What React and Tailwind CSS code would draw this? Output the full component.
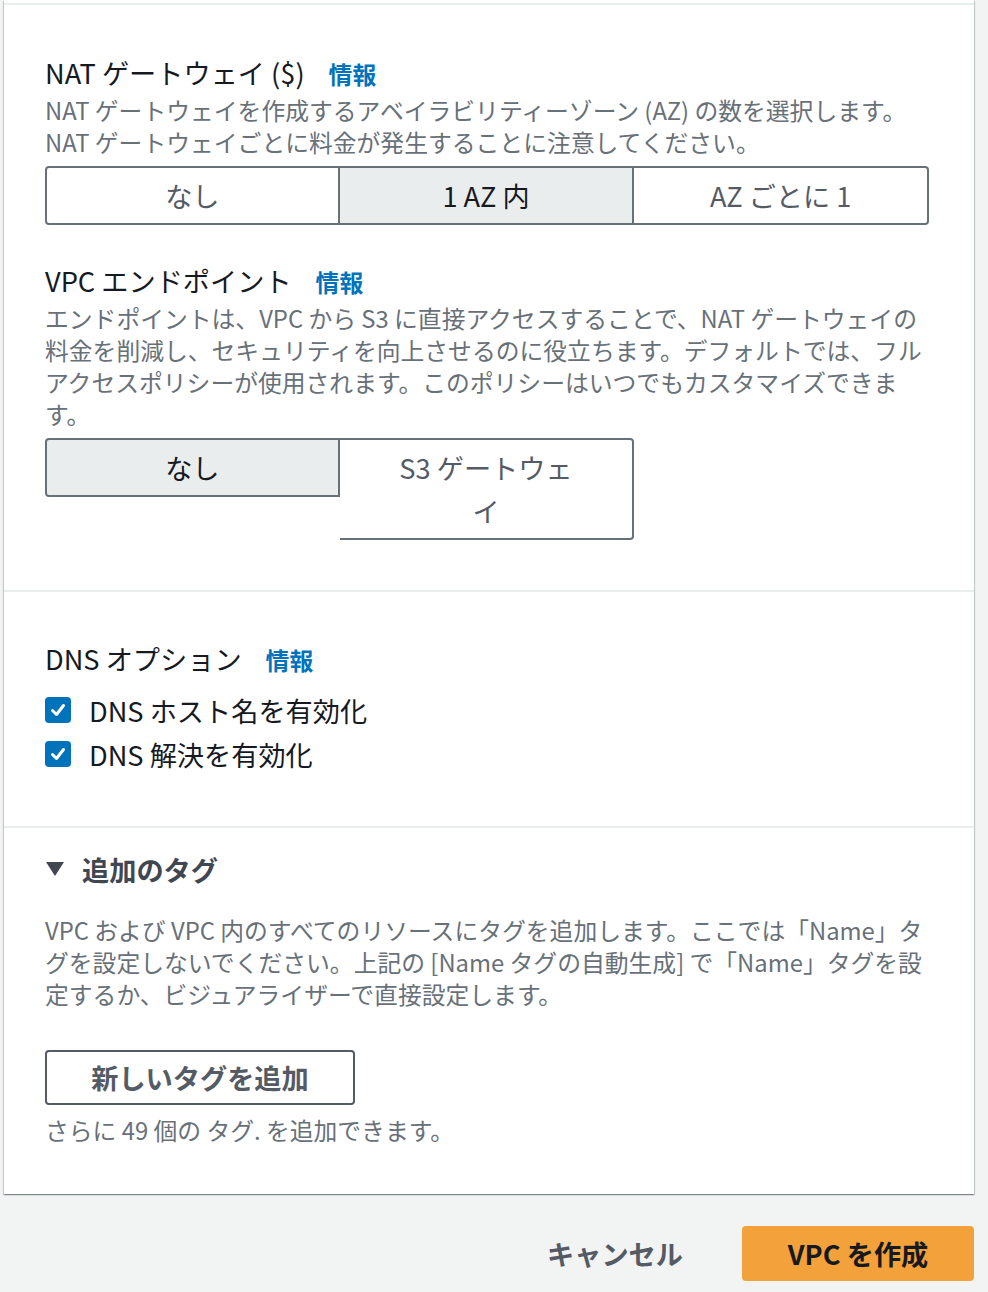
const SegButton = ({ label, selected, first, last }) => (
  <button
    className={`border-y-2 border-r-2 border-[#687078] px-[52px] py-[6px] text-center text-[27.2px] leading-[43px] ${
      first ? "border-l-2 rounded-l-[4px]" : ""
    } ${last ? "rounded-r-[4px]" : ""} ${
      selected ? "bg-[#eaeded] text-[#16191f]" : "bg-white text-[#545b64]"
    }`}
  >
    {label}
  </button>
);

const Info = () => (
  <a className="ml-[24px] text-[23.8px] font-bold leading-none text-[#0073bb]">
    情報
  </a>
);

const Title = ({ children }) => (
  <h2 className="text-[27.2px] leading-[36px] text-[#16191f]">
    {children}
    <Info />
  </h2>
);

const Desc = ({ children, className = "" }) => (
  <p className={`text-[23.8px] leading-[32px] text-[#687078] ${className}`}>
    {children}
  </p>
);

const Check = ({ label }) => (
  <label className="flex h-[44px] items-center gap-[18px]">
    <span className="flex h-[26px] w-[26px] items-center justify-center rounded-[4px] bg-[#0073bb]">
      <svg width="18" height="18" viewBox="0 0 18 18">
        <polyline
          points="3.5,9.5 7.5,13.5 14.5,4.5"
          fill="none"
          stroke="white"
          strokeWidth="3"
          strokeLinecap="round"
          strokeLinejoin="round"
        />
      </svg>
    </span>
    <span className="text-[27.2px] text-[#16191f]">{label}</span>
  </label>
);

export default function App() {
  return (
    <div className="min-h-screen bg-[#f2f3f3] font-['Noto_Sans_CJK_JP',sans-serif]">
      <div className="ml-[4px] mr-[14px] bg-white shadow-[0_1px_1px_0_rgba(0,28,36,0.3),1px_1px_1px_0_rgba(0,28,36,0.15),-1px_1px_1px_0_rgba(0,28,36,0.15)]">
        <div className="h-[3px]" />

        {/* NAT / endpoints */}
        <section className="border-t-2 border-[#eaeded] px-[41px] pt-[49px] pb-[50px]">
          <Title>NAT ゲートウェイ ($)</Title>
          <Desc className="mt-1">
            NAT ゲートウェイを作成するアベイラビリティーゾーン (AZ) の数を選択します。
            NAT ゲートウェイごとに料金が発生することに注意してください。
          </Desc>
          <div className="mt-2 grid w-[884px] grid-cols-3 items-start">
            <SegButton label="なし" first />
            <SegButton label="1 AZ 内" selected />
            <SegButton label="AZ ごとに 1" last />
          </div>

          <div className="mt-[37px]">
            <Title>VPC エンドポイント</Title>
          </div>
          <Desc className="mt-1">
            エンドポイントは、VPC から S3 に直接アクセスすることで、NAT ゲートウェイの料金を削減し、セキュリティを向上させるのに役立ちます。デフォルトでは、フルアクセスポリシーが使用されます。このポリシーはいつでもカスタマイズできます。
          </Desc>
          <div className="mt-2 grid w-[884px] grid-cols-3 items-start">
            <SegButton label="なし" selected first />
            <SegButton label="S3 ゲートウェイ" last />
          </div>
        </section>

        {/* DNS */}
        <section className="border-t-2 border-[#eaeded] px-[41px] pt-[48px] pb-[50px]">
          <Title>DNS オプション</Title>
          <div className="mt-3 flex flex-col">
            <Check label="DNS ホスト名を有効化" />
            <Check label="DNS 解決を有効化" />
          </div>
        </section>

        {/* tags */}
        <section className="border-t-2 border-[#eaeded] px-[41px] pt-[21px] pb-[48px]">
          <h2 className="flex items-center gap-[18px] text-[27.2px] font-bold leading-[40px] text-[#414750]">
            <svg width="18" height="14" viewBox="0 0 18 14" className="ml-[1px]">
              <polygon points="0,0 18,0 9,14" fill="#414750" />
            </svg>
            追加のタグ
          </h2>
          <Desc className="mt-[25px]">
            VPC および VPC 内のすべてのリソースにタグを追加します。ここでは「Name」タグを設定しないでください。上記の [Name タグの自動生成] で「Name」タグを設定するか、ビジュアライザーで直接設定します。
          </Desc>
          <button className="mt-[40px] h-[55px] w-[310px] rounded-[4px] border-2 border-[#545b64] text-[27.2px] font-bold text-[#545b64]">
            新しいタグを追加
          </button>
          <Desc className="mt-[9px]">さらに 49 個の タグ. を追加できます。</Desc>
        </section>
      </div>

      <div className="mr-[14px] flex items-center justify-end pt-[32px]">
        <button className="mr-[59px] text-[27.2px] font-bold text-[#545b64]">
          キャンセル
        </button>
        <button className="h-[55px] w-[232px] rounded-[4px] bg-[#f2a13b] text-[27.2px] font-bold text-[#16191f]">
          VPC を作成
        </button>
      </div>
    </div>
  );
}
